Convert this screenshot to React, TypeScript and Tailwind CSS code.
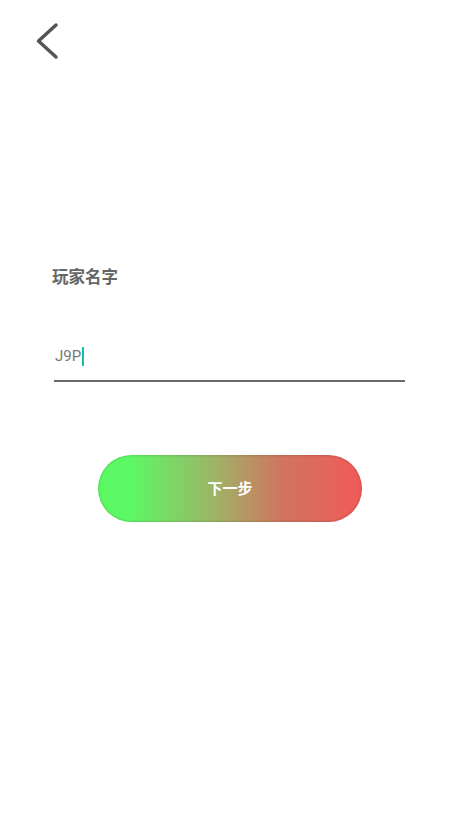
import React, { useState } from 'react';

const font = { fontFamily: '"Noto Sans", "Noto Sans CJK SC", sans-serif' };

const App = () => {
  const [name, setName] = useState('J9P');

  return (
    <div className="min-h-[819px] w-full bg-white" style={font}>
      <div className="px-[33px] pt-[22px]">
        <button className="block h-[38px] w-[28px]">
          <svg width="28" height="38" viewBox="0 0 28 38" fill="none">
            <path d="M23 3 L5.5 19 L23 35" stroke="#555" strokeWidth="3.5" strokeLinecap="round" strokeLinejoin="round" />
          </svg>
        </button>
      </div>

      <div className="pl-[52px] pr-[55px] pt-[206px]">
        <div className="text-[16.5px] font-semibold leading-[22px] text-[#666]">玩家名字</div>

        <div className="mt-[54px] ml-[2px] flex h-[40px] items-center border-b-[2px] border-[#6b6b6b] pb-[9px] pl-[1px]">
          <span className="font-['Roboto',sans-serif] text-[15px] text-[#777]">{name}</span>
          <span className="ml-[1px] h-[19px] w-[2px] bg-[#16c0a8]" />
          <input
            value={name}
            onChange={(e) => setName(e.target.value)}
            className="sr-only"
          />
        </div>
      </div>

      <div className="mt-[73px] flex justify-center">
        <button className="flex h-[67px] w-[264px] items-center justify-center rounded-full bg-[linear-gradient(90deg,#5cf965_12%,#9fb267_45%,#d1745f_70%,#f15a58_100%)] text-[15px] font-bold text-white shadow-[inset_0_0_3px_rgba(0,0,0,0.25)]">
          下一步
        </button>
      </div>
    </div>
  );
};

export default App;
